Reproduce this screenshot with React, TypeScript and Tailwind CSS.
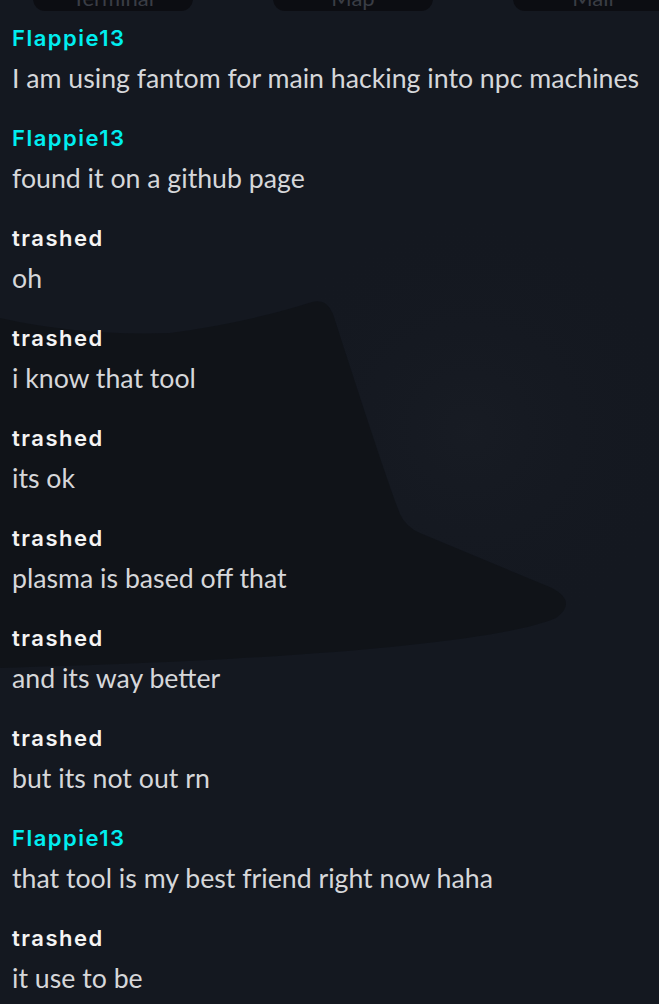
import React from "react";

type Msg = { user: string; text: string };

const messages: Msg[] = [
  { user: "Flappie13", text: "I am using fantom for main hacking into npc machines" },
  { user: "Flappie13", text: "found it on a github page" },
  { user: "trashed", text: "oh" },
  { user: "trashed", text: "i know that tool" },
  { user: "trashed", text: "its ok" },
  { user: "trashed", text: "plasma is based off that" },
  { user: "trashed", text: "and its way better" },
  { user: "trashed", text: "but its not out rn" },
  { user: "Flappie13", text: "that tool is my best friend right now haha" },
  { user: "trashed", text: "it use to be" },
];

export default function App() {
  return (
    <div className="relative w-[659px] h-[1004px] overflow-hidden bg-[#141820]">
      <svg
        className="absolute inset-0 pointer-events-none"
        width="659"
        height="1004"
        viewBox="0 0 659 1004"
      >
        <defs>
          <radialGradient id="glow" cx="470" cy="430" r="220" gradientUnits="userSpaceOnUse">
            <stop offset="0" stopColor="#1a1e26" stopOpacity="0.6" />
            <stop offset="1" stopColor="#141820" stopOpacity="0" />
          </radialGradient>
        </defs>
        <rect x="0" y="0" width="659" height="1004" fill="url(#glow)" />
        <path
          d="M 0 318 Q 80 336 170 333 Q 250 322 312 302 Q 327 298 333 314 C 356 385 384 472 400 514 Q 406 527 420 533 L 552 588 Q 578 602 556 618 C 500 642 300 660 0 668 Z"
          fill="#0e1116"
          fillOpacity="0.7"
        />
      </svg>

      <div className="relative flex flex-col">
        <div className="h-[11px] overflow-hidden flex items-end gap-[80px] pl-[33px]">
          {["Terminal", "Map", "Mail"].map((t) => (
            <div
              key={t}
              className="shrink-0 w-[160px] h-[40px] rounded-[12px] bg-[#0c0d12] flex items-end justify-center pb-[3px]"
            >
              <span className="text-[22px] leading-[20px] text-[#3a3d45] font-['Lato',sans-serif]">
                {t}
              </span>
            </div>
          ))}
        </div>

        <div className="flex flex-col gap-[30px] pt-[13px] pl-[12px]">
          {messages.map((m, i) => (
            <div key={i} className="flex flex-col">
              <div
                className={`h-[28px] text-[22px] leading-[28px] font-semibold font-['Inter',sans-serif] tracking-[1.5px] ${
                  m.user === "Flappie13" ? "text-[#00eef0]" : "text-[#f4f4f4]"
                }`}
              >
                {m.user}
              </div>
              <div className="mt-[10px] h-[32px] text-[26.7px] leading-[32px] text-[#d6d7da] font-['Lato',sans-serif] whitespace-nowrap">
                {m.text}
              </div>
            </div>
          ))}
        </div>
      </div>
    </div>
  );
}
